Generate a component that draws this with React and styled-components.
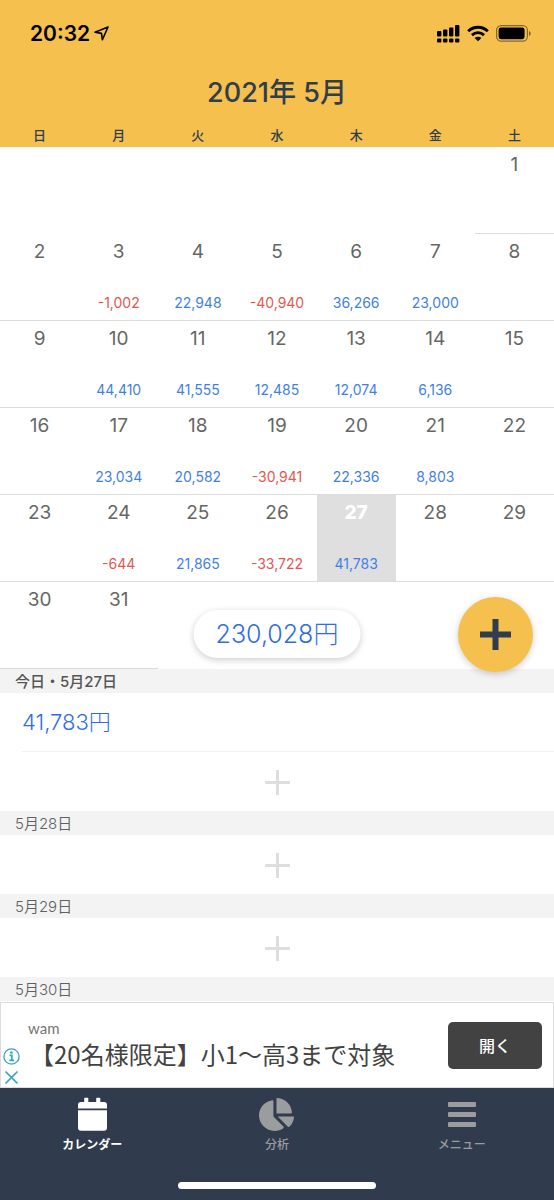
import React from "react";
import styled, { createGlobalStyle } from "styled-components";
import { FaChartPie } from "react-icons/fa";

const GlobalStyle = createGlobalStyle`
  *, *::before, *::after { box-sizing: border-box; }
  body {
    margin: 0;
    background: #fff;
    color: #666;
    font-family: Inter, "Noto Sans CJK JP", sans-serif;
  }
  button { font: inherit; border: 0; padding: 0; margin: 0; cursor: pointer; }
  a { color: inherit; text-decoration: none; }
`;

const Screen = styled.div`
  min-height: 100vh;
  display: flex;
  flex-direction: column;
`;

const Header = styled.header`
  background: #f5c04d;
  color: #2f3d4d;
`;

const StatusBar = styled.div`
  display: flex;
  align-items: center;
  justify-content: space-between;
  height: 67px;
  padding: 0 23px 0 30px;
  color: #000;
`;

const StatusGroup = styled.div`
  display: flex;
  align-items: center;
  gap: ${(p) => p.$gap}px;
`;

const Clock = styled.time`
  font-size: 21px;
  line-height: 24px;
  font-weight: 600;
`;

const Title = styled.h1`
  margin: 0;
  padding-bottom: 5px;
  height: 57px;
  display: flex;
  align-items: center;
  justify-content: center;
  font-size: 27px;
  line-height: 32px;
  font-weight: 500;
  white-space: pre;
`;

const CalendarArea = styled.section`
  position: relative;
`;

const Calendar = styled.table`
  width: 100%;
  table-layout: fixed;
  border-collapse: separate;
  border-spacing: 0;
`;

const Weekday = styled.th`
  height: 23px;
  padding: 0 0 2px;
  background: #f5c04d;
  color: #2f3d4d;
  font-size: 13px;
  line-height: 20px;
  font-weight: 500;
`;

const DayCell = styled.td`
  height: 87px;
  padding: 5px 0 0;
  vertical-align: top;
  text-align: center;
  border-bottom: 1px solid ${(p) => (p.$empty ? "transparent" : "#dcdcdc")};
  background: ${(p) => (p.$today ? "#dfdfdf" : "#fff")};
`;

const DayNumber = styled.div`
  font-size: 19px;
  line-height: 26px;
  font-weight: ${(p) => (p.$today ? 800 : 400)};
  color: ${(p) => (p.$today ? "#fff" : "#666")};
`;

const Amount = styled.div`
  margin-top: 28px;
  font-size: 14px;
  line-height: 20px;
  color: ${(p) => (p.$negative ? "#e25850" : "#3f7fe8")};
`;

const TotalPill = styled.div`
  position: absolute;
  left: 50%;
  bottom: 11px;
  transform: translateX(-50%);
  padding: 0 22px;
  border-radius: 24px;
  background: #fff;
  box-shadow: 0 2px 7px rgba(0, 0, 0, 0.2);
  color: #2f6de6;
  font-size: 25px;
  line-height: 48px;
  font-weight: 350;
  white-space: nowrap;
`;

const Unit = styled.span`
  font-weight: 300;
`;

const AddButton = styled.button`
  position: absolute;
  right: 21px;
  bottom: -3px;
  width: 75px;
  height: 75px;
  display: grid;
  place-items: center;
  border-radius: 50%;
  background: #f5c04d;
  color: #2f3d4f;
  box-shadow: 0 2px 7px rgba(0, 0, 0, 0.2);
`;

const DayHeading = styled.h2`
  margin: 0;
  padding: 1px 0 0 15px;
  height: 24px;
  background: #f3f3f3;
  color: ${(p) => (p.$today ? "#555" : "#606060")};
  font-size: 15px;
  line-height: 24px;
  font-weight: ${(p) => (p.$today ? 500 : 350)};
`;

const Entry = styled.div`
  margin-left: 22px;
  height: 59px;
  display: flex;
  align-items: center;
  border-bottom: 1px solid #f1f1f1;
  color: #2f6de6;
  font-size: 22px;
  line-height: 30px;
  font-weight: 350;
`;

const AddRow = styled.button`
  display: flex;
  width: 100%;
  height: 59px;
  padding-top: 1px;
  align-items: center;
  justify-content: center;
  background: #fff;
  color: #dedede;
`;

const Footer = styled.footer`
  position: sticky;
  bottom: 0;
  margin-top: auto;
`;

const Ad = styled.aside`
  height: 86px;
  display: flex;
  align-items: center;
  padding-right: 11px;
  border: 1px solid #dcdcdc;
  background: #fff;
`;

const AdMarks = styled.div`
  align-self: flex-end;
  display: flex;
  flex-direction: column;
  align-items: center;
  gap: 4px;
  width: 20px;
  padding-bottom: 1px;
`;

const MarkButton = styled.button`
  display: block;
  height: 17px;
  background: none;
  color: #35a3c4;
`;

const AdCopy = styled.div`
  flex: 1;
  padding: 0 0 2px 7px;
`;

const Advertiser = styled.div`
  font-size: 15px;
  line-height: 20px;
  font-family: Lato, sans-serif;
  color: #757575;
`;

const AdTitle = styled.div`
  padding-left: 2px;
  font-family: "Noto Sans CJK JP", sans-serif;
  font-size: 24px;
  line-height: 32px;
  color: #424242;
  white-space: nowrap;
`;

const OpenButton = styled.button`
  width: 94px;
  height: 47px;
  border-radius: 5px;
  background: #424242;
  color: #fff;
  font-size: 16px;
  font-weight: 500;
`;

const TabBar = styled.nav`
  display: grid;
  grid-template-columns: repeat(3, 1fr);
  padding-top: 9px;
  height: 94px;
  background: #303c4e;
`;

const Tab = styled.a`
  display: flex;
  flex-direction: column;
  align-items: center;
  gap: 3px;
  color: ${(p) => (p.$active ? "#fff" : "#9b9c9e")};
  font-size: 12px;
  line-height: 20px;
  font-weight: ${(p) => (p.$active ? 700 : 500)};

  svg { display: block; height: 35px; }
`;

const HomeArea = styled.div`
  display: flex;
  justify-content: center;
  height: 18px;
  background: #303c4e;
`;

const HomeIndicator = styled.div`
  width: 198px;
  height: 7px;
  border-radius: 4px;
  background: #fff;
`;

const weekdays = ["日", "月", "火", "水", "木", "金", "土"];
const firstOffset = 6;
const today = 27;
const amounts = {
  3: -1002, 4: 22948, 5: -40940, 6: 36266, 7: 23000,
  10: 44410, 11: 41555, 12: 12485, 13: 12074, 14: 6136,
  17: 23034, 18: 20582, 19: -30941, 20: 22336, 21: 8803,
  24: -644, 25: 21865, 26: -33722, 27: 41783,
};
const weeks = Array.from({ length: 6 }, (_, w) =>
  Array.from({ length: 7 }, (_, d) => {
    const day = w * 7 + d - firstOffset + 1;
    return day >= 1 && day <= 31 ? day : null;
  })
);
const upcoming = ["5月28日", "5月29日"];

const LocationIcon = () => (
  <svg width="15" height="15" viewBox="0 0 15 15" fill="none" stroke="currentColor" strokeWidth="1.6" strokeLinejoin="round" aria-hidden="true">
    <path d="M14 1 1 6.2l6.5 1.2.9 6.4z" />
  </svg>
);

const SignalIcon = () => (
  <svg width="23" height="18" viewBox="0 0 23 18" fill="currentColor" aria-hidden="true">
    {[6, 4.5, 2.5, 0].map((y, i) => (
      <React.Fragment key={y}>
        <rect x={i * 6} y={y} width="4.4" height={11.5 - y} rx="1" />
        <rect x={i * 6} y="13.4" width="4.4" height="4.2" rx="1" />
      </React.Fragment>
    ))}
  </svg>
);

const WifiIcon = () => (
  <svg width="22" height="17" viewBox="0 0 22 17" fill="none" stroke="currentColor" strokeWidth="2.9" aria-hidden="true">
    <path d="M1.2 6.3a14 14 0 0 1 19.6 0M5 10.1a8.6 8.6 0 0 1 12 0" />
    <path d="M11 16.3 7.7 13a4.7 4.7 0 0 1 6.6 0z" fill="currentColor" stroke="none" />
  </svg>
);

const BatteryIcon = () => (
  <svg width="35" height="17" viewBox="0 0 35 17" aria-hidden="true">
    <rect x=".6" y=".6" width="30.8" height="15.6" rx="4.6" fill="none" stroke="#000" strokeOpacity=".45" strokeWidth="1.2" />
    <rect x="2.6" y="2.6" width="26" height="11.6" rx="2.4" />
    <path d="M33 6v5c2.2-.8 2.2-4.2 0-5z" opacity=".5" />
  </svg>
);

const PlusIcon = ({ size, stroke }) => (
  <svg width={size} height={size} viewBox={`0 0 ${size} ${size}`} stroke="currentColor" strokeWidth={stroke} aria-hidden="true">
    <path d={`M${size / 2} 0V${size}M0 ${size / 2}H${size}`} />
  </svg>
);

const InfoIcon = () => (
  <svg width="17" height="17" viewBox="0 0 17 17" fill="none" stroke="currentColor" aria-hidden="true">
    <circle cx="8.5" cy="8.5" r="7.6" strokeWidth="1.3" />
    <path d="M6.6 7.4h2.2v5M6.3 12.4h4.8" strokeWidth="1.7" />
    <circle cx="8.4" cy="4.5" r="1.3" fill="currentColor" stroke="none" />
  </svg>
);

const CloseIcon = () => (
  <svg width="17" height="17" viewBox="0 0 17 17" stroke="currentColor" strokeWidth="1.7" aria-hidden="true">
    <path d="M2.5 2.5l12 12M14.5 2.5l-12 12" />
  </svg>
);

const CalendarIcon = () => (
  <svg width="29" height="35" viewBox="0 0 29 35" fill="currentColor" aria-hidden="true">
    <path d="M0 11.5V8a3 3 0 0 1 3-3h3.2V1.6c0-.5.3-.8.8-.8h2.5c.5 0 .8.3.8.8V5h7.9V1.6c0-.5.3-.8.8-.8h2.5c.5 0 .8.3.8.8V5H26a3 3 0 0 1 3 3v3.5z" />
    <path d="M0 13.2h29v17.5a3 3 0 0 1-3 3H3a3 3 0 0 1-3-3z" />
  </svg>
);

const MenuIcon = () => (
  <svg width="28" height="35" viewBox="0 0 28 35" fill="currentColor" aria-hidden="true">
    <rect y="5" width="28" height="5" rx="1" />
    <rect y="15" width="28" height="5" rx="1" />
    <rect y="25" width="28" height="5" rx="1" />
  </svg>
);

export default function App() {
  return (
    <Screen>
      <GlobalStyle />
      <Header>
        <StatusBar>
          <StatusGroup $gap={4}>
            <Clock>20:32</Clock>
            <LocationIcon />
          </StatusGroup>
          <StatusGroup $gap={7}>
            <SignalIcon />
            <WifiIcon />
            <BatteryIcon />
          </StatusGroup>
        </StatusBar>
        <Title>2021年 5月</Title>
      </Header>
      <main>
        <CalendarArea>
          <Calendar>
            <thead>
              <tr>
                {weekdays.map((d) => <Weekday key={d} scope="col">{d}</Weekday>)}
              </tr>
            </thead>
            <tbody>
              {weeks.map((week, w) => (
                <tr key={w}>
                  {week.map((day, i) => (
                    <DayCell key={i} $empty={!day} $today={day === today}>
                      {day && <DayNumber $today={day === today}>{day}</DayNumber>}
                      {amounts[day] && (
                        <Amount $negative={amounts[day] < 0}>
                          {amounts[day].toLocaleString("en-US")}
                        </Amount>
                      )}
                    </DayCell>
                  ))}
                </tr>
              ))}
            </tbody>
          </Calendar>
          <TotalPill>230,028<Unit>円</Unit></TotalPill>
          <AddButton type="button" aria-label="追加">
            <PlusIcon size={31} stroke={6} />
          </AddButton>
        </CalendarArea>
        <section>
          <DayHeading $today>今日・5月27日</DayHeading>
          <Entry>41,783<Unit>円</Unit></Entry>
          <AddRow type="button" aria-label="追加"><PlusIcon size={25} stroke={3} /></AddRow>
        </section>
        {upcoming.map((label) => (
          <section key={label}>
            <DayHeading>{label}</DayHeading>
            <AddRow type="button" aria-label="追加"><PlusIcon size={25} stroke={3} /></AddRow>
          </section>
        ))}
        <DayHeading>5月30日</DayHeading>
      </main>
      <Footer>
        <Ad>
          <AdMarks>
            <MarkButton type="button" aria-label="広告情報"><InfoIcon /></MarkButton>
            <MarkButton type="button" aria-label="閉じる"><CloseIcon /></MarkButton>
          </AdMarks>
          <AdCopy>
            <Advertiser>wam</Advertiser>
            <AdTitle>【20名様限定】小1〜高3まで対象</AdTitle>
          </AdCopy>
          <OpenButton type="button">開く</OpenButton>
        </Ad>
        <TabBar>
          <Tab href="#calendar" $active aria-current="page"><CalendarIcon />カレンダー</Tab>
          <Tab href="#analysis"><FaChartPie size={35} aria-hidden="true" />分析</Tab>
          <Tab href="#menu"><MenuIcon />メニュー</Tab>
        </TabBar>
        <HomeArea><HomeIndicator /></HomeArea>
      </Footer>
    </Screen>
  );
}
